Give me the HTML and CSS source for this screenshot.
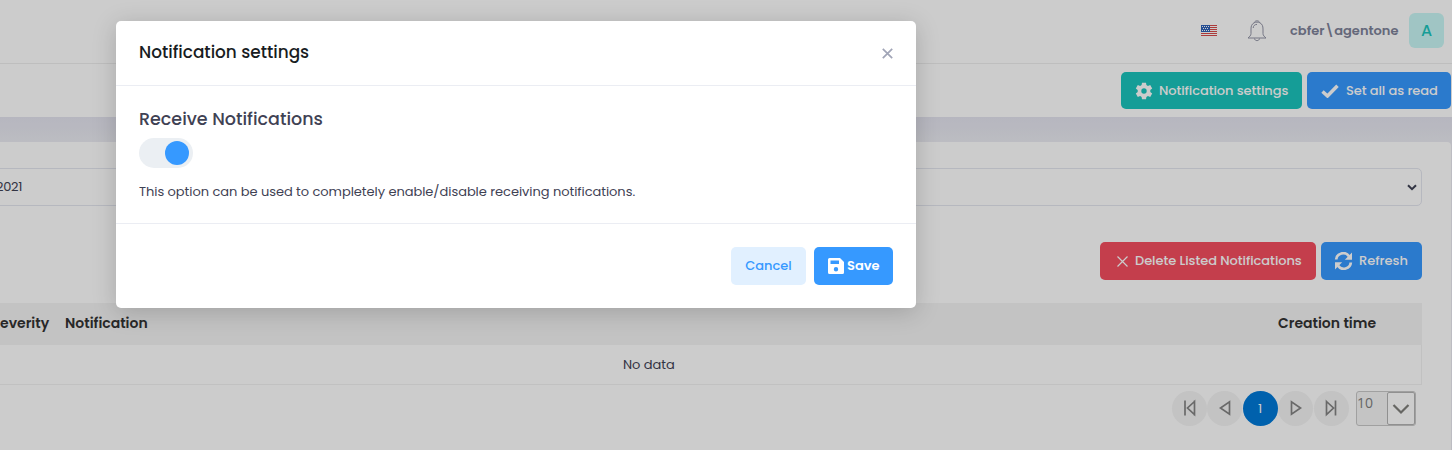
FILE: index.html
```html
<!DOCTYPE html>
<html lang="en">
<head>
<meta charset="utf-8">
<title>Notifications</title>
<link rel="stylesheet" href="styles.css">
</head>
<body>
<div class="page">
  <header class="topbar">
    <svg class="flag" width="16" height="11" viewBox="0 0 16 11"><rect width="16" height="11" fill="#fff"/><path d="M0 .5h16M0 2.500h16M0 4.500h16M0 6.500h16M0 8.500h16M0 10.500h16" stroke="#d84a4a"/><rect width="9" height="7" fill="#2d62b8"/><path d="M1 1.500h7M2 3.500h6M1 5.500h7" stroke="#fff" stroke-dasharray="1 1"/></svg>
    <svg class="bell" width="20" height="22" viewBox="0 0 20 22" fill="none" stroke="#9294a6" stroke-width="1"><path d="M7.300 2.700C7.800.2 12.200.2 12.700 2.700M7.300 2.700C4.700 4 4 6.200 4 9v4.500c0 2-1.300 3-3 4.500h18c-1.700-1.500-3-2.500-3-4.500V9c0-2.800-.7-5-3.300-6.300-1.500-.8-3.900-.8-5.400 0zM7.500 18.500c.2 2.800 4.800 2.800 5 0"/><path d="M6.200 8c.1-2.200 1.500-3.600 3.800-3.600"/></svg>
    <span class="user">cbfer\agentone</span>
    <span class="avatar">A</span>
  </header>
  <div class="toolbar">
    <button class="btn teal"><svg width="18" height="18" viewBox="0 0 18 18"><path fill="#fff" fill-rule="evenodd" d="M7 .8h4l.4 2.300 1.500.9 2.300-.9 2 3.500-1.900 1.500v1.800l1.900 1.500-2 3.500-2.300-.9-1.500.9-.4 2.300H7l-.4-2.300-1.500-.9-2.300.9-2-3.500 1.900-1.500V8.100L.8 6.600l2-3.500 2.300.9 1.500-.9zM9 6.300a2.700 2.700 0 100 5.400 2.700 2.700 0 000-5.400z"/></svg><span>Notification settings</span></button>
    <button class="btn blue setall"><svg width="18" height="14" viewBox="0 0 18 14"><path d="M1.500 7.500l5 4.500L16.500 1.800" fill="none" stroke="#fff" stroke-width="3.500"/></svg><span>Set all as read</span></button>
  </div>
  <main class="card">
    <div class="filters"><div class="date"><span>2021</span></div><div class="select"><svg width="10" height="7" viewBox="0 0 10 7"><path d="M1 1.200l4 4 4-4" fill="none" stroke="#3f4254" stroke-width="2"/></svg></div></div>
    <div class="actions">
      <button class="btn red"><svg width="13" height="13" viewBox="0 0 13 13"><path d="M1.500 1.500l10 10M11.500 1.500l-10 10" stroke="#fff" stroke-width="1.200"/></svg><span>Delete Listed Notifications</span></button>
      <button class="btn blue refresh"><svg width="19" height="18" viewBox="0 0 19 18"><path d="M2.200 7.500A7 6.600 0 0115 4.200M16.800 10.500A7 6.600 0 014 13.800" fill="none" stroke="#fff" stroke-width="2.800"/><path d="M18 .5v7.200h-7.200zM1 17.500v-7.200h7.200z" fill="#fff"/></svg><span>Refresh</span></button>
    </div>
    <div class="thead"><span class="th-sev">everity</span><span>Notification</span><span class="th-time">Creation time</span></div>
    <div class="empty"><span>No data</span></div>
    <div class="pager">
      <span class="pg"><svg width="14" height="18" viewBox="0 0 14 18"><path d="M3 1.500v15M12.500 2.500L5.500 9l7 6.500zM12.500 1.500v15"/></svg></span>
      <span class="pg"><svg width="14" height="18" viewBox="0 0 14 18"><path d="M11.500 2.800v12.400L2.500 9z"/></svg></span>
      <span class="pg active">1</span>
      <span class="pg"><svg width="14" height="18" viewBox="0 0 14 18"><path d="M2.500 2.800v12.400l9-6.200z"/></svg></span>
      <span class="pg"><svg width="14" height="18" viewBox="0 0 14 18"><path d="M11.500 1.500v15M2.500 2.500L9.500 9l-7 6.500z"/></svg></span>
      <div class="rows"><span class="num">10</span><span class="trigger"><svg width="18" height="12" viewBox="0 0 18 12"><path d="M1.500 2L9 9.500 16.500 2" fill="none" stroke="#80807c" stroke-width="2.200"/></svg></span></div>
    </div>
  </main>
</div>
<div class="backdrop"></div>
<section class="modal">
  <div class="modal-head"><span class="modal-title">Notification settings</span><svg class="close" width="11" height="11" viewBox="0 0 11 11"><path d="M.8.8l9.400 9.400M10.200.8L.8 10.200" stroke="#a1a5b7" stroke-width="1.700"/></svg></div>
  <div class="modal-body"><h3>Receive Notifications</h3><div class="switch"><i></i></div><p>This option can be used to completely enable/disable receiving notifications.</p></div>
  <div class="modal-foot"><button class="btn light">Cancel</button><button class="btn blue save"><svg width="16" height="16" viewBox="0 0 16 16"><path fill="#fff" fill-rule="evenodd" d="M1.500 0H12l4 4v10.500a1.500 1.500 0 01-1.500 1.500h-13A1.500 1.500 0 010 14.500v-13A1.500 1.500 0 011.500 0zM2.500 2.500v3.500h8.500V2.500zM8 9a2.200 2.200 0 100 4.400A2.200 2.200 0 008 9z"/></svg><span>Save</span></button></div>
</section>
</body>
</html>
```
FILE: styles.css
```css
* { box-sizing: border-box; }
body { margin: 0; height: 450px; overflow: hidden; font-family: Poppins, Inter, sans-serif; font-size: 13px; color: #3f4254; }
span, h3, p { white-space: nowrap; }
svg { display: block; flex: none; }
.page { height: 450px; background: linear-gradient(#e4e4ef 117px, #ebecf3 142px); }
.topbar { height: 64px; padding: 0 8px 2px 0; display: flex; align-items: center; justify-content: flex-end; background: #fff; border-bottom: 1px solid #eee; }
.bell { margin-left: 30px; }
.user { margin-left: 23px; width: 110px; font-weight: 600; color: #7e8299; }
.avatar { margin-left: 9px; width: 35px; height: 35px; border-radius: 6px; background: #c9f7f5; color: #1bc5bd; font-size: 16px; font-weight: 500; display: flex; align-items: center; justify-content: center; }
.toolbar { height: 53px; padding: 0 1px 0 0; background: #fff; display: flex; align-items: center; justify-content: flex-end; gap: 5px; }
.btn { border: 0; border-radius: 5px; height: 38px; padding: 0; display: flex; align-items: center; font: 500 13px Poppins, Inter, sans-serif; color: #fff; }
.toolbar .btn { height: 37px; letter-spacing: -.08px; }
.teal { background: #1bc5bd; width: 181px; padding-left: 14px; gap: 6px; }
.blue { background: #3699ff; }
.setall { width: 144px; padding-left: 14px; gap: 7px; }
.card { height: 308px; margin: 25px 1px 0 0; padding: 26px 29px 0 0; background: #fff; border-radius: 0 4px 0 0; }
.filters { display: flex; gap: 20px; height: 38px; }
.date { flex: 1; border: 1px solid #e4e6ef; border-left: 0; display: flex; align-items: center; }
.date span { margin-left: -4px; letter-spacing: -.3px; }
.select { flex: 1; border: 1px solid #e4e6ef; border-radius: 5px; display: flex; align-items: center; justify-content: flex-end; padding-right: 4px; }
.actions { margin-top: 36px; display: flex; justify-content: flex-end; gap: 5px; letter-spacing: 0; }
.red { background: #f64e60; width: 216px; padding-left: 16px; gap: 6px; letter-spacing: -.06px; }
.refresh { width: 101px; padding-left: 13px; gap: 6px; }
.thead { margin-top: 23px; height: 42px; background: #f4f4f4; display: flex; align-items: center; font-size: 14px; font-weight: 600; color: #333; padding-bottom: 1px; }
.th-sev { width: 65px; }
.th-time { margin-left: auto; width: 144px; }
.empty { height: 40px; border: 1px solid #f2f2f2; border-width: 0 1px 1px 0; display: flex; align-items: center; padding-left: 623px; letter-spacing: -.05px; }
.pager { margin-top: 6px; padding-right: 6px; display: flex; justify-content: flex-end; gap: .5px; }
.pg { width: 35px; height: 35px; border-radius: 50%; background: #f4f4f4; display: flex; align-items: center; justify-content: center; }
.pg svg { margin-top: -1px; }
.pg path { fill: none; stroke: #848484; stroke-width: 1.700; }
.active { background: #007ad9; color: #fff; }
.rows { margin-left: 7px; width: 60px; height: 35px; border: 1px solid #c8c8c8; border-radius: 3px; background: #f6f6f6; display: flex; justify-content: space-between; }
.num { padding: 1px 0 0; font: 14px "Open Sans", sans-serif; color: #808080; }
.trigger { width: 28px; border: 1px solid #b5b5b5; border-radius: 2px; background: #fff; display: flex; align-items: center; justify-content: center; }
.backdrop { position: absolute; inset: 0; height: 450px; background: rgba(0,0,0,.2); }
.modal { position: absolute; left: 116px; top: 21px; width: 800px; height: 287px; background: #fff; border-radius: 5px; box-shadow: 0 4px 24px rgba(0,0,0,.18); }
.modal-head { height: 65px; padding: 0 23px 2px; border-bottom: 1px solid #ebedf3; display: flex; align-items: center; justify-content: space-between; }
.close { margin-top: 2px; }
.modal-title { font-size: 16.900px; font-weight: 500; color: #181c22; }
.modal-body { height: 138px; padding: 23px 23px 0; border-bottom: 1px solid #ebedf3; }
h3 { margin: 0; font-size: 17.500px; font-weight: 500; line-height: 20px; }
.switch { margin-top: 9px; width: 54px; height: 30px; border-radius: 15px; background: #ebeff3; padding: 3px 4px; display: flex; justify-content: flex-end; }
.switch i { width: 24px; height: 24px; border-radius: 50%; background: #3699ff; }
p { margin: 14px 0 0; line-height: 20px; letter-spacing: -.045px; }
.modal-foot { padding: 23px 23px 0; display: flex; justify-content: flex-end; gap: 8px; }
.light { width: 75px; justify-content: center; background: #e1f0ff; color: #3699ff; }
.save { width: 79px; padding-left: 14px; gap: 3px; font-weight: 600; }
```
